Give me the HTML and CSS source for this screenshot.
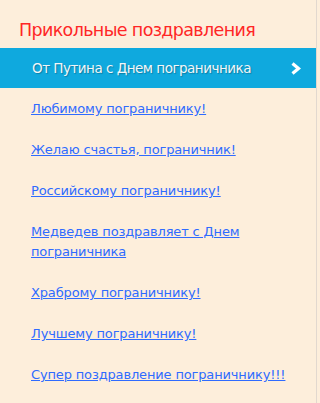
FILE: index.html
```html
<!DOCTYPE html>
<html lang="ru">
<head>
<meta charset="utf-8">
<link rel="stylesheet" href="styles.css">
</head>
<body>
<div class="sidebar">
  <h2 class="title">Прикольные поздравления</h2>
  <ul class="menu">
    <li class="active"><a href="#"><span>От Путина с Днем пограничника</span>
      <svg class="chev" width="10" height="13" viewBox="0 0 10 13"><path d="M1.5 1.5 L7.5 6.5 L1.5 11.5" fill="none" stroke="#fff" stroke-width="3.2" stroke-linejoin="miter"/></svg></a></li>
    <li><a href="#">Любимому пограничнику!</a></li>
    <li><a href="#">Желаю счастья, пограничник!</a></li>
    <li><a href="#">Российскому пограничнику!</a></li>
    <li><a href="#">Медведев поздравляет с Днем пограничника</a></li>
    <li><a href="#">Храброму пограничнику!</a></li>
    <li><a href="#">Лучшему пограничнику!</a></li>
    <li><a href="#">Супер поздравление пограничнику!!!</a></li>
  </ul>
</div>
</body>
</html>
```
FILE: styles.css
```css
html, body {
  margin: 0;
  padding: 0;
  background: #fdeedb;
}
body {
  font-family: "DejaVu Sans", Verdana, sans-serif;
}
.sidebar {
  width: 317px;
  min-height: 403px;
  border-right: 1px solid #e2d8cf;
  box-sizing: border-box;
}
.title {
  margin: 0;
  padding: 20px 0 0 19px;
  height: 48px;
  box-sizing: border-box;
  font-size: 17.5px;
  font-weight: normal;
  line-height: 20px;
  color: #ff2626;
  letter-spacing: -0.65px;
}
.menu {
  list-style: none;
  margin: 0;
  padding: 0;
}
.menu li {
  padding: 11px 20px 10px 31px;
  font-size: 13px;
  line-height: 20px;
}
.menu li a {
  color: #2f6bff;
  text-decoration: underline;
  letter-spacing: -0.15px;
}
.menu li.active {
  background: #0fa9de;
  padding: 0;
  height: 40px;
}
.menu li.active a {
  display: flex;
  align-items: center;
  justify-content: space-between;
  height: 40px;
  padding: 0 15px 0 32px;
  color: #f2f6f8;
  text-decoration: none;
  font-size: 13.5px;
  letter-spacing: -0.5px;
  text-shadow: 1px 1px 1px rgba(0, 0, 0, 0.25);
}
.chev {
  display: block;
}
```
